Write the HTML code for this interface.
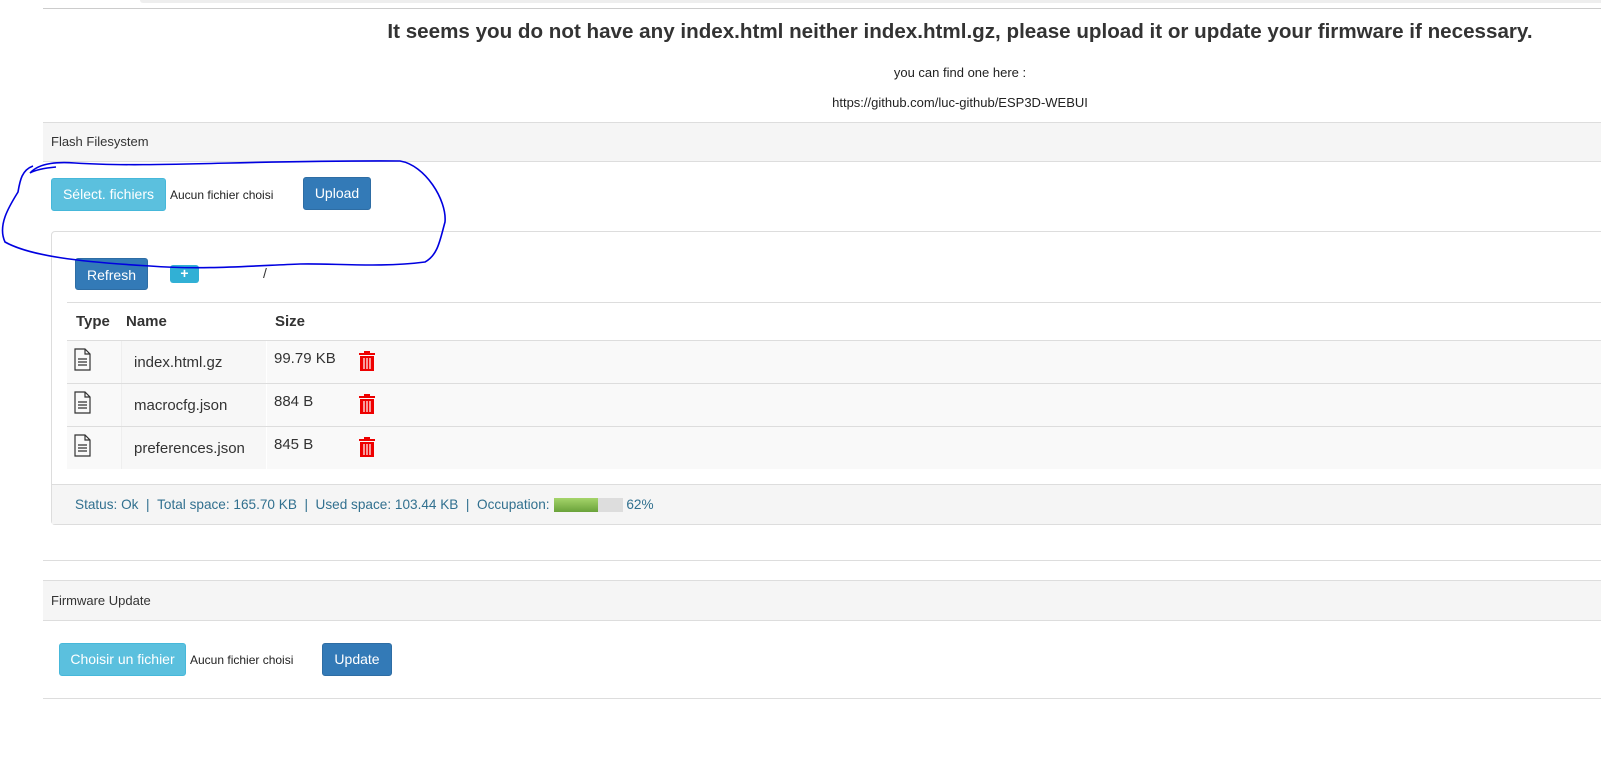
<!DOCTYPE html>
<html><head><meta charset="utf-8"><style>
body{margin:0;width:1601px;height:772px;background:#fff;font-family:"Liberation Sans",sans-serif;color:#333;position:relative;overflow:hidden}
.a{position:absolute}
.btn{position:absolute;color:#fff;font-size:14px;text-align:center;border-radius:3px;box-sizing:border-box}
.info{background:#5bc0de;border:1px solid #46b8da}
.pri{background:#337ab7;border:1px solid #2e6da4}
.row{position:absolute;left:67px;width:1534px;background:#f9f9f9;border-top:1px solid #ddd}
.nm{position:absolute;left:54px;top:0;width:144px;height:100%;background:#f7f7f7;border-left:1px solid #eee;border-right:1px solid #fff}
.tx{position:absolute;font-size:15px;color:#333}
</style></head><body>
<div class="a" style="left:140px;top:0;width:1461px;height:3px;background:#eee;border-radius:0 0 0 8px"></div>
<div class="a" style="left:43px;top:8px;width:1558px;height:1px;background:#ccc"></div>
<div class="a" style="left:260px;width:1400px;top:20px;text-align:center;font-weight:bold;font-size:20.6px;color:#333;white-space:nowrap">It seems you do not have any index.html neither index.html.gz, please upload it or update your firmware if necessary.</div>
<div class="a" style="left:760px;width:400px;top:65px;text-align:center;font-size:13px;color:#222">you can find one here :</div>
<div class="a" style="left:760px;width:400px;top:95px;text-align:center;font-size:13px;color:#222">https://github.com/luc-github/ESP3D-WEBUI</div>

<div class="a" style="left:43px;top:122px;width:1558px;height:437px;border-top:1px solid #ddd;border-bottom:1px solid #ddd"></div>
<div class="a" style="left:43px;top:123px;width:1558px;height:38px;background:#f5f5f5;border-bottom:1px solid #ddd"></div>
<div class="a" style="left:51px;top:134px;font-size:13px;color:#333">Flash Filesystem</div>
<div class="btn info" style="left:51px;top:178px;width:115px;height:33px;line-height:31px">Sélect. fichiers</div>
<div class="a" style="left:170px;top:188px;font-size:12px;color:#222">Aucun fichier choisi</div>
<div class="btn pri" style="left:303px;top:177px;width:68px;height:33px;line-height:31px">Upload</div>

<div class="a" style="left:51px;top:231px;width:1560px;height:292px;border:1px solid #ddd;border-radius:4px"></div>
<div class="btn pri" style="left:75px;top:258px;width:73px;height:32px;line-height:32px">Refresh</div>
<div class="btn" style="left:170px;top:265px;width:29px;height:18px;background:#31b0d5;font-weight:bold;font-size:14px;line-height:17px">+</div>
<div class="a" style="left:263px;top:265px;font-size:14px">/</div>
<div class="a" style="left:67px;top:302px;width:1534px;height:1px;background:#ddd"></div>
<div class="a" style="left:76px;top:313px;font-weight:bold;font-size:15px">Type</div>
<div class="a" style="left:126px;top:313px;font-weight:bold;font-size:15px">Name</div>
<div class="a" style="left:275px;top:313px;font-weight:bold;font-size:15px">Size</div>

<div class="row" style="top:340px;height:43px"><div class="nm"></div><div class="tx" style="left:67px;top:13px">index.html.gz</div><div class="tx" style="left:207px;top:9px">99.79 KB</div></div>
<div class="row" style="top:383px;height:43px"><div class="nm"></div><div class="tx" style="left:67px;top:13px">macrocfg.json</div><div class="tx" style="left:207px;top:9px">884 B</div></div>
<div class="row" style="top:426px;height:42px"><div class="nm"></div><div class="tx" style="left:67px;top:13px">preferences.json</div><div class="tx" style="left:207px;top:9px">845 B</div></div>
<svg class="a" style="left:0;top:0" width="1601" height="772">
<g fill="none" stroke="#333" stroke-width="1.2">
<path d="M75 349h10l5 5v16h-15z M85 349v5h5 M78 359h9 M78 362h9 M78 365h9"/>
<path d="M75 392h10l5 5v16h-15z M85 392v5h5 M78 402h9 M78 405h9 M78 408h9"/>
<path d="M75 435h10l5 5v16h-15z M85 435v5h5 M78 445h9 M78 448h9 M78 451h9"/>
</g>
<g fill="#e00">
<path d="M359 353h16v2h-16z M364 351h6v2h-6z M360 356h14v15h-14z"/>
<path d="M359 396h16v2h-16z M364 394h6v2h-6z M360 399h14v15h-14z"/>
<path d="M359 439h16v2h-16z M364 437h6v2h-6z M360 442h14v15h-14z"/>
</g>
<g stroke="#fff" stroke-width="1.2">
<path d="M364 358v11 M367 358v11 M370 358v11"/><path d="M364 401v11 M367 401v11 M370 401v11"/><path d="M364 444v11 M367 444v11 M370 444v11"/>
</g>
</svg>

<div class="a" style="left:52px;top:484px;width:1549px;height:39px;background:#f5f5f5;border-top:1px solid #ddd"></div>
<div class="a" style="left:75px;top:497px;font-size:13.6px;color:#31708f;white-space:nowrap;display:flex;align-items:center">Status: Ok &nbsp;| &nbsp;Total space: 165.70 KB &nbsp;| &nbsp;Used space: 103.44 KB &nbsp;| &nbsp;Occupation:<span style="display:inline-block;margin-left:4px;width:69px;height:14px;background:#ddd"><span style="display:block;width:44px;height:14px;background:linear-gradient(#a5d46a,#6aa23a)"></span></span>&nbsp;62%</div>

<div class="a" style="left:43px;top:580px;width:1558px;height:117px;border-top:1px solid #ddd;border-bottom:1px solid #ddd"></div>
<div class="a" style="left:43px;top:581px;width:1558px;height:39px;background:#f5f5f5;border-bottom:1px solid #ddd"></div>
<div class="a" style="left:51px;top:593px;font-size:13px">Firmware Update</div>
<div class="btn info" style="left:59px;top:643px;width:127px;height:33px;line-height:31px">Choisir un fichier</div>
<div class="a" style="left:190px;top:653px;font-size:12px;color:#222">Aucun fichier choisi</div>
<div class="btn pri" style="left:322px;top:643px;width:70px;height:33px;line-height:31px">Update</div>

<svg class="a" style="left:0;top:0" width="1601" height="772"><path fill="none" stroke="#0000e0" stroke-width="1.6" d="M56 167 C45 168 35 170 30 173 C40 162 60 162 75 163 C150 168 250 160 400 161 C425 165 447 200 445 222 C440 240 438 255 425 262 C380 268 330 263 300 264 C250 266 200 270 150 266 C80 262 30 256 5 242 C-3 225 10 205 18 192 C20 180 22 170 33 166"/></svg>
</body></html>
